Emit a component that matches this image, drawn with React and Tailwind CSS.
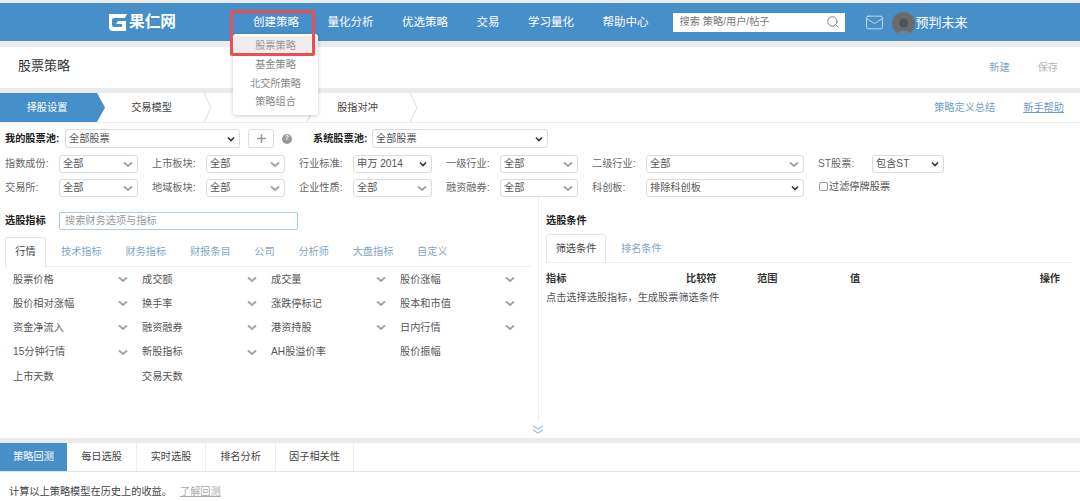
import React from 'react';
import { Mail, Search, Plus } from 'lucide-react';

const navItems = ['创建策略', '量化分析', '优选策略', '交易', '学习量化', '帮助中心'];
const steps = ['交易模型', '', '股指对冲'];
const indicatorTabs = ['技术指标', '财务指标', '财报条目', '公司', '分析师', '大盘指标', '自定义'];
const bottomTabs = [
  ['每日选股', 'w-[70px]'],
  ['实时选股', 'w-[69px]'],
  ['排名分析', 'w-[70px]'],
  ['因子相关性', 'w-[78px]'],
];

const filterRows = [
  [
    ['指数成份:', '全部', 'w-[79px]'],
    ['上市板块:', '全部', 'w-[79px]'],
    ['行业标准:', '申万 2014', 'w-[79px]', true],
    ['一级行业:', '全部', 'w-[78px]'],
    ['二级行业:', '全部', 'w-[158px]'],
    ['ST股票:', '包含ST', 'w-[72px]', true],
  ],
  [
    ['交易所:', '全部', 'w-[79px]'],
    ['地域板块:', '全部', 'w-[79px]'],
    ['企业性质:', '全部', 'w-[79px]'],
    ['融资融券:', '全部', 'w-[78px]'],
    ['科创板:', '排除科创板', 'w-[158px]', true],
  ],
];

const indicators = [
  ['股票价格', true], ['成交额', true], ['成交量', true], ['股价涨幅', true],
  ['股价相对涨幅', true], ['换手率', true], ['涨跌停标记', true], ['股本和市值', true],
  ['资金净流入', true], ['融资融券', true], ['港资持股', true], ['日内行情', true],
  ['15分钟行情', true], ['新股指标', true], ['AH股溢价率', false], ['股价振幅', false],
  ['上市天数', false], ['交易天数', false],
];

// thin grey chevron used by the styled selects, dark one for the native looking selects
const Chevron = ({ native }) =>
  native ? (
    <svg width="8" height="6" viewBox="0 0 8 6" className="shrink-0">
      <path d="M1 1.5 L4 4.5 L7 1.5" fill="none" stroke="#333" strokeWidth="1.6" />
    </svg>
  ) : (
    <svg width="10" height="7" viewBox="0 0 10 7" className="shrink-0">
      <path d="M1 1.5 L5 5 L9 1.5" fill="none" stroke="#a3a3a3" strokeWidth="2" />
    </svg>
  );

const SelectBox = ({ value, width, native, className = 'h-[18px]' }) => (
  <div className={`flex items-center justify-between rounded-[3px] border border-[#dcdcdc] bg-white pl-[3px] pr-[4px] text-[#555] ${width} ${className}`}>
    <span>{value}</span>
    <Chevron native={native} />
  </div>
);

const FilterCell = ({ label, value, width, native }) => (
  <div className="flex items-center">
    <span className="w-[54px] text-[#666]">{label}</span>
    <SelectBox value={value} width={width} native={native} />
  </div>
);

const StepDivider = () => (
  <svg width="10" height="29" viewBox="0 0 10 29" className="absolute right-[-5px] top-0">
    <path d="M1 0 L8 14.5 L1 29" fill="none" stroke="#dcdcdc" strokeWidth="1" />
  </svg>
);

const Logo = () => (
  <div className="flex items-center gap-[1px] text-white">
    <svg width="20" height="19" viewBox="0 0 20 19">
      <path d="M1 1 H19 L17 5 H6 Q4 5 4 7 V12 Q4 14 6 14 H14 V11 H8 L10 8 H18 V18 H5 Q1 18 1 14 Z" fill="#fff" />
    </svg>
    <span className="text-[15.7px] font-bold leading-none">果仁网</span>
  </div>
);

const NavBar = () => (
  <header className="mt-[3px] flex h-[38px] items-center bg-[#478fc8] pl-[108px] text-white">
    <Logo />
    <nav className="ml-[77px] flex gap-[28.5px] pt-[1px] text-[11.5px]">
      {navItems.map((item) => (
        <span key={item}>{item}</span>
      ))}
    </nav>
    <div className="ml-[24px] flex h-[19px] w-[172px] items-center justify-between bg-white pl-[7px] pr-[5px] text-[10.2px] text-[#777]">
      <span>搜索 策略/用户/帖子</span>
      <Search size={14} strokeWidth={1.6} className="text-[#777]" />
    </div>
    <Mail size={19} strokeWidth={1.1} className="ml-[20px] text-[#d5e5f3]" />
    <div className="ml-[8px] mt-[3px] flex h-[23px] w-[23px] items-end justify-center overflow-hidden rounded-full bg-[#6b6b6b]">
      <svg width="19" height="19" viewBox="0 0 19 19">
        <circle cx="9.5" cy="7" r="4.5" fill="#505356" />
        <path d="M2 19 C3 13 16 13 17 19 Z" fill="#5f87a8" />
      </svg>
    </div>
    <span className="ml-[1px] pt-[1px] text-[13px]">预判未来</span>
  </header>
);

const CreateMenu = () => (
  <>
    <div className="absolute left-[233px] top-[34px] z-10 flex h-[81px] w-[85px] flex-col items-center rounded-[3px] bg-white pt-[2px] text-[#888] shadow-[0_1px_4px_rgba(0,0,0,0.2)]">
      <div className="flex h-[19px] w-full items-center justify-center bg-[#eeeeee] text-[#999]">股票策略</div>
      <div className="flex h-[19px] items-center">基金策略</div>
      <div className="flex h-[19px] items-center">北交所策略</div>
      <div className="flex h-[18px] items-center">策略组合</div>
    </div>
    <div className="absolute left-[230px] top-[10px] z-20 h-[46px] w-[85px] rounded-[2px] border-[3px] border-[#ea4f58]" />
  </>
);

export default function App() {
  return (
    <div className="relative flex h-[501px] w-[1080px] flex-col overflow-hidden bg-[#ebebeb] text-[10.2px] text-[#444] [font-family:'Liberation_Sans','Noto_Sans_CJK_SC',sans-serif]">
      <NavBar />
      <CreateMenu />

      <section className="mt-[6px] flex h-[41px] items-center justify-between bg-white pl-[18px] pr-[22px]">
        <h1 className="pb-[3px] text-[13px] text-[#333]">股票策略</h1>
        <div className="flex gap-[28px]">
          <span className="text-[#7ea6c8]">新建</span>
          <span className="text-[#b5b5b5]">保存</span>
        </div>
      </section>

      <section className="mt-[5px] flex h-[29px] items-center justify-between bg-white pr-[16px]">
        <div className="flex h-full">
          <div className="flex h-full w-[105px] items-center justify-center pr-[11px] text-white bg-[#478fc8] [clip-path:polygon(0_0,97px_0,105px_50%,97px_100%,0_100%)]">择股设置</div>
          {steps.map((step, i) => (
            <div key={i} className="relative flex h-full w-[103px] items-center justify-center pr-[10px] text-[#444]">
              {step}
              <StepDivider />
            </div>
          ))}
        </div>
        <div className="flex gap-[28px] text-[#6f9dc4]">
          <span>策略定义总结</span>
          <span className="underline">新手帮助</span>
        </div>
      </section>

      <main className="mt-[1px] flex min-h-0 flex-1 flex-col bg-white">
        <div className="flex h-[32px] shrink-0 items-center pb-[1px] pl-[5px]">
          <span className="w-[60px] font-bold text-[#222]">我的股票池:</span>
          <SelectBox value="全部股票" width="w-[175px]" native className="h-[19px]" />
          <div className="ml-[8px] flex h-[19px] w-[26px] items-center justify-center rounded-[3px] border border-[#dcdcdc]">
            <Plus size={13} strokeWidth={3} className="text-[#999]" />
          </div>
          <div className="ml-[8px] flex h-[10px] w-[10px] items-center justify-center rounded-full bg-[#999] text-[7px] font-bold text-white">?</div>
          <span className="ml-[21px] w-[59px] font-bold text-[#222]">系统股票池:</span>
          <SelectBox value="全部股票" width="w-[176px]" native className="h-[19px]" />
        </div>

        <div className="flex flex-col gap-[6px] pl-[5px]">
          {filterRows.map((row, r) => (
            <div key={r} className="flex items-center gap-[14px]">
              {row.map(([label, value, width, native]) => (
                <FilterCell key={label} label={label} value={value} width={width} native={native} />
              ))}
              {r === 1 && (
                <label className="mb-[2px] ml-[1px] flex items-center text-[#555]">
                  <span className="mr-[1px] h-[9px] w-[9px] rounded-[2px] border border-[#999]" />
                  过滤停牌股票
                </label>
              )}
            </div>
          ))}
        </div>

        <div className="flex min-h-0 flex-1">
          <div className="w-[539px] border-r border-[#eeeeee]">
            <div className="mt-[15px] flex items-center pl-[5px]">
              <span className="w-[54px] font-bold text-[#222]">选股指标</span>
              <div className="flex h-[18px] w-[239px] items-center rounded-[2px] border border-[#a9cbe8] pl-[5px] text-[#999]">搜索财务选项与指标</div>
            </div>
            <div className="ml-[5px] mr-[7px] mt-[7px] flex h-[30px] items-center border-b border-[#eeeeee]">
              <div className="flex h-[30px] w-[41px] items-center justify-center rounded-t-[3px] border border-b-0 border-[#e5e5e5] bg-white text-[#444]">行情</div>
              <div className="ml-[15px] flex gap-[23.7px] text-[#7ea6c8]">
                {indicatorTabs.map((tab) => (
                  <span key={tab}>{tab}</span>
                ))}
              </div>
            </div>
            <div className="grid grid-cols-[129px_129px_129px_129px] auto-rows-[24.3px] pl-[13px] text-[#555]">
              {indicators.map(([name, more]) => (
                <div key={name} className="flex items-center justify-between pr-[14px]">
                  <span>{name}</span>
                  {more && <Chevron />}
                </div>
              ))}
            </div>
          </div>

          <div className="flex-1 pl-[7px] pr-[9px]">
            <div className="mt-[16px] font-bold text-[#222]">选股条件</div>
            <div className="mt-[6px] flex h-[29px] items-center border-b border-[#eeeeee]">
              <div className="flex h-[29px] w-[60px] items-center justify-center rounded-t-[3px] border border-b-0 border-[#e5e5e5] text-[#444]">筛选条件</div>
              <span className="ml-[15px] text-[#7ea6c8]">排名条件</span>
            </div>
            <div className="mt-[8px] flex pr-[11px] font-bold text-[#333]">
              <span className="w-[140px]">指标</span>
              <span className="w-[71px]">比较符</span>
              <span className="w-[93px]">范围</span>
              <span className="flex-1">值</span>
              <span>操作</span>
            </div>
            <p className="mt-[3px] text-[#555]">点击选择选股指标，生成股票筛选条件</p>
          </div>
        </div>

        <div className="flex h-[17px] shrink-0 justify-center pr-[5px] pt-[4px]">
          <svg width="12" height="9" viewBox="0 0 12 9">
            <path d="M1 1 L6 4 L11 1 M1 5 L6 8 L11 5" fill="none" stroke="#9cc3e4" strokeWidth="1.3" />
          </svg>
        </div>
      </main>

      <div className="h-[5px] shrink-0" />

      <section className="flex h-[29px] shrink-0 border-b border-[#e5e5e5] bg-white">
        <div className="flex w-[67px] items-center justify-center bg-[#478fc8] text-white">策略回测</div>
        {bottomTabs.map(([tab, width]) => (
          <div key={tab} className={`flex items-center justify-center border-r border-[#eeeeee] text-[#444] ${width}`}>{tab}</div>
        ))}
      </section>

      <section className="flex h-[29px] shrink-0 items-start bg-white pl-[9px] pt-[12px]">
        <span className="text-[#444]">计算以上策略模型在历史上的收益。</span>
        <span className="ml-[8px] text-[#aaa] underline">了解回测</span>
      </section>
    </div>
  );
}
